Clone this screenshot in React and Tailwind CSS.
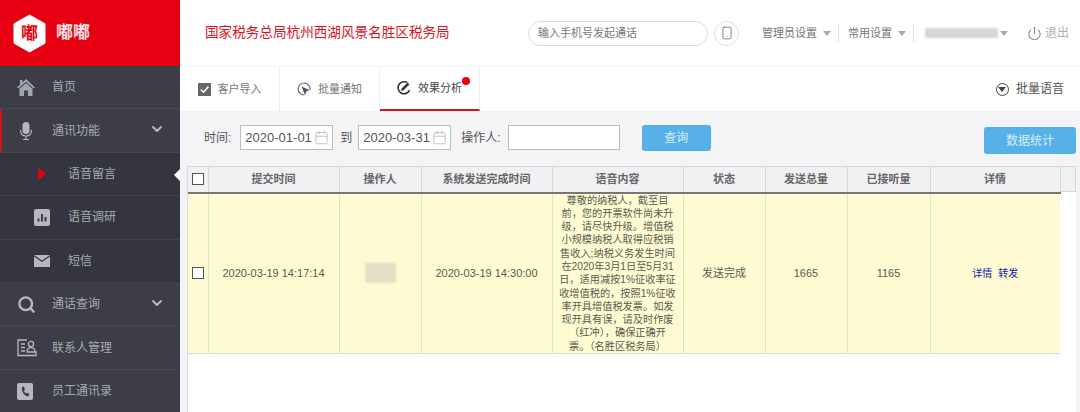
import { ChevronDown, Search, Smartphone, Power, Calendar } from 'lucide-react';

function Logo() {
  return (
    <div className="relative flex h-[39px] w-[33px] items-center justify-center">
      <svg viewBox="0 0 33 39" className="absolute inset-0 h-full w-full">
        <path d="M16.5 0.5 L31.5 9 Q32.5 9.6 32.5 11 L32.5 28 Q32.5 29.4 31.5 30 L16.5 38.5 L1.5 30 Q0.5 29.4 0.5 28 L0.5 11 Q0.5 9.6 1.5 9 Z" fill="#fff" />
      </svg>
      <span className="relative text-[17px] font-bold leading-none text-[#e60012]">嘟</span>
    </div>
  );
}

function HomeIcon() {
  return (
    <svg viewBox="0 0 18 17" className="h-[17px] w-[18px]" fill="#a3a5ad">
      <path d="M9 0 L18 8.4 L16.6 9.6 L9 2.8 L1.4 9.6 L0 8.4 L3 5.6 V1 H5.4 V3.4 Z" />
      <path d="M9 4 L15.5 9.8 V17 H11 V11.5 H7 V17 H2.5 V9.8 Z" />
    </svg>
  );
}

function MicIcon() {
  return (
    <svg viewBox="0 0 12 18" className="h-[18px] w-[12px]" fill="none" stroke="#b6b8be" strokeWidth="1.2">
      <rect x="2.5" y="0" width="7" height="12" rx="3.5" fill="#b6b8be" stroke="none" />
      <path d="M0.7 8 V9 Q0.7 14 6 14 Q11.3 14 11.3 9 V8 M6 14 V17.5 M3 17.5 H9" />
    </svg>
  );
}

function ChartIcon() {
  return (
    <svg viewBox="0 0 16 17" className="h-[17px] w-[16px]">
      <rect width="16" height="17" rx="2" fill="#b6b8be" />
      <path d="M3.5 9.5 H5.5 V12.5 H3.5 Z M7 5 H9 V12.5 H7 Z M10.5 8 H12.5 V12.5 H10.5 Z" fill="#3c3d47" />
    </svg>
  );
}

function MailIcon() {
  return (
    <svg viewBox="0 0 16 12" className="h-[12px] w-[16px]">
      <path d="M0 0 H16 L8 5.5 Z" fill="#b6b8be" />
      <path d="M0 1.5 L8 7 L16 1.5 V12 H0 Z" fill="#b6b8be" />
    </svg>
  );
}

function ContactsIcon() {
  return (
    <svg viewBox="0 0 20 18" className="h-[18px] w-[20px]" fill="none" stroke="#b6b8be" strokeWidth="1.3">
      <path d="M10 1 H1 V16.5 H19 V12" />
      <path d="M4 5 H8 M4 8.5 H8 M4 12 H8" />
      <circle cx="14" cy="5" r="2.6" />
      <path d="M10 13 Q10 8.6 14 8.6 Q18 8.6 18 13 Z" />
    </svg>
  );
}

function PhoneIcon() {
  return (
    <svg viewBox="0 0 16 17" className="h-[17px] w-[16px]">
      <rect width="16" height="17" rx="2" fill="#b6b8be" />
      <path d="M5 4 L7 3.5 L8 6.5 L6.8 7.5 Q7.6 9.6 9.2 10.6 L10.4 9.6 L12.5 11.8 L11 13.2 Q8.4 13.4 6.2 10.2 Q4.2 7 5 4 Z" fill="#3c3d47" />
    </svg>
  );
}

function MenuRow({ icon, label, arrow, active, last }) {
  return (
    <div className={`relative flex h-[43.4px] shrink-0 items-center pl-[17px] ${last ? '' : 'border-b border-[#464751]'}`}>
      {active && <div className="absolute left-0 top-0 h-full w-[2px] bg-[#c8161d]" />}
      <div className="flex w-[35px] justify-start">{icon}</div>
      <span className="text-xs text-[#a9abb1]">{label}</span>
      {arrow && <ChevronDown size={16} strokeWidth={3} className="absolute right-[15px] top-[12px] text-[#b6b8be]" />}
    </div>
  );
}

function SubRow({ icon, label, current }) {
  return (
    <div className="relative flex h-[43.4px] shrink-0 items-center border-b border-[#40414a] bg-[#34353e] pl-[34px]">
      <div className="flex w-[34px] justify-start">{icon}</div>
      <span className="text-xs text-[#a9abb1]">{label}</span>
      {current && <div className="absolute right-0 top-[16px] h-0 w-0 border-y-[6px] border-r-[6px] border-y-transparent border-r-white" />}
    </div>
  );
}

function Sidebar() {
  return (
    <aside className="flex h-[412px] w-[180px] shrink-0 flex-col overflow-hidden bg-[#3c3d47]">
      <div className="flex h-[66px] shrink-0 items-center gap-[10px] bg-[#e60012] pl-[13px]">
        <Logo />
        <span className="text-[17px] font-bold text-[#fbe3e5]">嘟嘟</span>
      </div>
      <MenuRow label="首页" icon={<HomeIcon />} />
      <MenuRow label="通讯功能" arrow active icon={<div className="pl-[3px]"><MicIcon /></div>} />
      <SubRow
        current
        label="语音留言"
        icon={<div className="ml-[4px] h-0 w-0 border-y-[6px] border-l-[8px] border-y-transparent border-l-[#e60012]" />}
      />
      <SubRow label="语音调研" icon={<ChartIcon />} />
      <SubRow label="短信" icon={<MailIcon />} />
      <MenuRow label="通话查询" arrow icon={<Search size={19} strokeWidth={3} className="text-[#b6b8be]" />} />
      <MenuRow label="联系人管理" icon={<ContactsIcon />} />
      <MenuRow last label="员工通讯录" icon={<PhoneIcon />} />
    </aside>
  );
}

function Caret() {
  return <span className="ml-[6px] h-0 w-0 border-x-[4px] border-t-[5px] border-x-transparent border-t-[#a8a8a8]" />;
}

function Header() {
  return (
    <header className="flex h-[67px] shrink-0 items-center border-b border-[#f3f3f3] bg-white pl-[25px]">
      <h1 className="w-[323px] text-[13.6px] text-[#d9121f]">国家税务总局杭州西湖风景名胜区税务局</h1>
      <div className="flex h-[25px] w-[180px] items-center rounded-full border border-[#dcdcdc] pl-[9px] text-[11px] text-[#777]">
        输入手机号发起通话
      </div>
      <div className="ml-[6px] flex h-[25px] w-[25px] items-center justify-center rounded-full border border-[#e0e0e0]">
        <Smartphone size={14} strokeWidth={1.5} className="text-[#777]" />
      </div>
      <div className="ml-[23px] flex items-center text-[11px] text-[#777]">
        管理员设置<Caret />
      </div>
      <div className="ml-[7px] mr-[9px] h-[18px] w-px bg-[#e4e4e4]" />
      <div className="flex items-center text-[11px] text-[#777]">
        常用设置<Caret />
      </div>
      <div className="ml-[7px] mr-[11px] h-[18px] w-px bg-[#e4e4e4]" />
      <div className="h-[10px] w-[73px] bg-[#d6d6d6] blur-[1px]" />
      <span className="ml-[2px] h-0 w-0 border-x-[4px] border-t-[5px] border-x-transparent border-t-[#a8a8a8]" />
      <Power size={15} strokeWidth={1.8} className="ml-[19px] text-[#8a8a8a]" />
      <span className="ml-[3px] text-xs text-[#b0b0b0]">退出</span>
    </header>
  );
}

function CheckTabIcon() {
  return (
    <svg viewBox="0 0 13 13" className="h-[13px] w-[13px]">
      <rect width="13" height="13" fill="#666" />
      <path d="M2.8 6.5 L5.5 9.2 L10.4 3.6" fill="none" stroke="#fff" strokeWidth="1.6" />
    </svg>
  );
}

function CursorTabIcon() {
  return (
    <svg viewBox="0 0 14 14" className="h-[14px] w-[14px]" fill="none">
      <path d="M13 8 A6 6 0 1 0 7.5 13" stroke="#666" strokeWidth="1.2" />
      <path d="M4.5 4.5 L12.5 8 L9.4 9.4 L8 13 Z" fill="#555" />
    </svg>
  );
}

function PencilTabIcon() {
  return (
    <svg viewBox="0 0 14 14" className="h-[14px] w-[14px]" fill="none">
      <path d="M11 2.2 A6 6 0 1 0 12.6 9" stroke="#333" strokeWidth="1.6" />
      <path d="M3.5 10.5 L4.4 7.4 L10.5 1.3 L12.7 3.5 L6.6 9.6 Z" fill="#333" stroke="#fff" strokeWidth="0.6" />
    </svg>
  );
}

function Tab({ icon, label, active, dot, width }) {
  return (
    <div className={`relative flex h-full items-center justify-center gap-[7px] border-r border-[#f0f0f0] ${width} ${active ? 'border-b-2 border-b-[#c8161d]' : ''}`}>
      {icon}
      <span className={`text-[11px] ${active ? 'text-[#444]' : 'text-[#777]'}`}>{label}</span>
      {dot && <div className="absolute left-[82px] top-[10px] h-2 w-2 rounded-full bg-[#e60012]" />}
    </div>
  );
}

function Tabs() {
  return (
    <div className="flex h-[44px] shrink-0 items-center bg-white">
      <Tab width="w-[100px]" label="客户导入" icon={<CheckTabIcon />} />
      <Tab width="w-[100px]" label="批量通知" icon={<CursorTabIcon />} />
      <Tab active dot width="w-[100px]" label="效果分析" icon={<PencilTabIcon />} />
      <div className="ml-auto flex items-center gap-[7px] pr-[16px]">
        <div className="flex h-[13px] w-[13px] items-center justify-center rounded-full border border-[#444]">
          <span className="h-0 w-0 border-x-[4px] border-t-[5px] border-x-transparent border-t-[#444]" />
        </div>
        <span className="text-xs text-[#555]">批量语音</span>
      </div>
    </div>
  );
}

function DateBox({ value }) {
  return (
    <div className="flex h-[25px] w-[93px] items-center justify-between border border-[#bcbcbc] bg-white pl-[4px] pr-[3px] text-[13px] text-[#555]">
      {value}
      <Calendar size={15} strokeWidth={1.2} className="text-[#b8b4ac]" />
    </div>
  );
}

function Filters() {
  return (
    <div className="relative flex h-[55px] shrink-0 items-center pb-[2px] pl-[17px] text-xs text-[#555]">
      <span className="mr-[9px]">时间:</span>
      <DateBox value="2020-01-01" />
      <span className="ml-[7px] mr-[6px]">到</span>
      <DateBox value="2020-03-31" />
      <span className="ml-[10px] mr-[7px]">操作人:</span>
      <div className="h-[25px] w-[112px] border border-[#bcbcbc] bg-white" />
      <button className="ml-[22px] h-[26px] w-[69px] rounded-[3px] bg-[#56b1e8] text-xs text-[#d9eefa]">查询</button>
      <button className="absolute right-0 top-[16px] h-[27px] w-[92px] rounded-[3px] bg-[#56b1e8] text-xs text-[#d9eefa]">数据统计</button>
    </div>
  );
}

function Check() {
  return <span className="mx-auto block h-[12px] w-[12px] border border-[#555] bg-white" />;
}

const headers = ['提交时间', '操作人', '系统发送完成时间', '语音内容', '状态', '发送总量', '已接听量', '详情'];
// full-width punctuation is written as escapes so it survives editing
const messageLines = [
  '尊敬的纳税人\uFF0C截至目',
  '前\uFF0C您的开票软件尚未升',
  '级\uFF0C请尽快升级。增值税',
  '小规模纳税人取得应税销',
  '售收入;纳税义务发生时间',
  '在2020年3月1日至5月31',
  '日\uFF0C适用减按1%征收率征',
  '收增值税的\uFF0C按照1%征收',
  '率开具增值税发票。如发',
  '现开具有误\uFF0C请及时作废',
  '\uFF08红冲\uFF09\uFF0C确保正确开',
  '票。\uFF08名胜区税务局\uFF09',
];

function DataTable() {
  return (
    <div className="flex flex-1 overflow-hidden border-l border-[#dcdcdc] bg-white">
      <table className="h-fit w-[872px] table-fixed border-collapse text-[11px]">
        <colgroup>
          <col className="w-[20px]" />
          <col className="w-[131px]" />
          <col className="w-[82px]" />
          <col className="w-[131px]" />
          <col className="w-[131px]" />
          <col className="w-[82px]" />
          <col className="w-[82px]" />
          <col className="w-[83px]" />
          <col className="w-[130px]" />
        </colgroup>
        <thead>
          <tr className="h-[26px] border-y border-y-[#d6d6d6] border-b-2 border-b-[#777] bg-[#f1f1f4]">
            <th className="border-r border-[#d6d6d6] p-0"><Check /></th>
            {headers.map((h) => (
              <th key={h} className="border-r border-[#d6d6d6] p-0 font-bold text-[#666]">{h}</th>
            ))}
          </tr>
        </thead>
        <tbody>
          <tr className="h-[161px] border-b border-[#d8d8d0] bg-[#fefbd2] text-center text-[#5c5c50]">
            <td className="border-r border-[#e4e2c4] p-0"><Check /></td>
            <td className="border-r border-[#e4e2c4] p-0">2020-03-19 14:17:14</td>
            <td className="border-r border-[#e4e2c4] p-0">
              <div className="mx-auto h-[20px] w-[31px] bg-[#e2e0c6] blur-[1px]" />
            </td>
            <td className="border-r border-[#e4e2c4] p-0">2020-03-19 14:30:00</td>
            <td className="border-r border-[#e4e2c4] p-0 text-[10.2px] leading-[13.3px]">
              {messageLines.map((line) => (
                <div key={line} className="whitespace-nowrap">{line}</div>
              ))}
            </td>
            <td className="border-r border-[#e4e2c4] p-0">发送完成</td>
            <td className="border-r border-[#e4e2c4] p-0">1665</td>
            <td className="border-r border-[#e4e2c4] p-0">1165</td>
            <td className="p-0 text-[10px] text-[#1414a8]">
              详情<span className="ml-[6px]">转发</span>
            </td>
          </tr>
        </tbody>
      </table>
      <div className="h-[26px] flex-1 border-y border-r border-[#d6d6d6] bg-[#f1f1f4]" />
    </div>
  );
}

export default function App() {
  return (
    <div className="flex h-[412px] w-[1080px] overflow-hidden bg-white font-['Liberation_Sans','Noto_Sans_CJK_SC',sans-serif]">
      <Sidebar />
      <main className="flex min-w-0 flex-1 flex-col">
        <Header />
        <Tabs />
        <div className="flex min-h-0 flex-1 flex-col bg-[#f4f4f7] pl-[7px] pr-[4px]">
          <Filters />
          <DataTable />
        </div>
      </main>
    </div>
  );
}
